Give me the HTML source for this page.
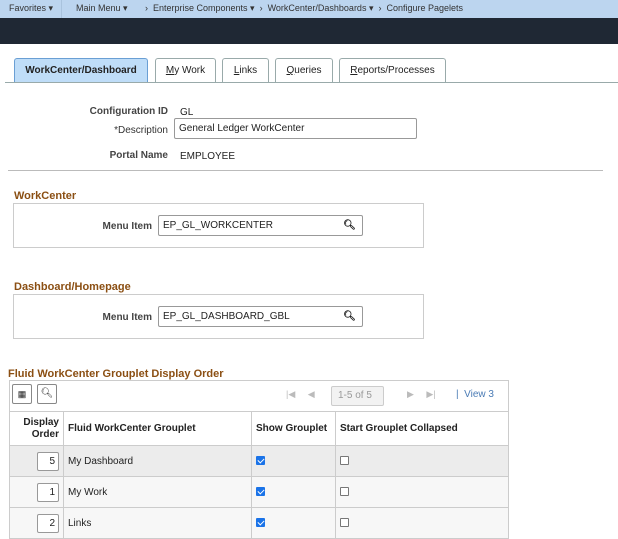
<!DOCTYPE html>
<html><head><style>
*{box-sizing:border-box;margin:0;padding:0}
body{width:618px;height:524px;overflow:hidden;background:#fff;font-family:"Liberation Sans",Arial,sans-serif;font-size:10px;color:#222;position:relative}
.a{position:absolute}
.tab{position:absolute;top:58px;height:25px;border:1px solid #9aa;border-bottom:none;border-radius:3px 3px 0 0;background:#fff;font-size:10px;text-align:center;line-height:23px;color:#222}
.lbl{position:absolute;font-weight:bold;color:#444;font-size:10px;text-align:right}
.inp{position:absolute;border:1px solid #999;border-radius:2px;background:#fff;font-size:10px;padding-left:4px;line-height:19px}
.sec{position:absolute;color:#8b4f13;font-weight:bold;font-size:11px}
.box{position:absolute;border:1px solid #ccc}
td{border:1px solid #ccc;font-size:10px;padding:0 4px}
.cb{display:inline-block;width:9px;height:9px;border:1px solid #777;border-radius:1px;vertical-align:middle;background:#fff}
.cbk{background:#1a73e8;border-color:#1a73e8;position:relative}
.cbk:after{content:"";position:absolute;left:2px;top:0px;width:3px;height:5px;border:solid #fff;border-width:0 1.5px 1.5px 0;transform:rotate(45deg)}
.oi{display:inline-block;width:22px;height:19px;border:1px solid #999;border-radius:2px;text-align:right;padding-right:3px;line-height:17px;background:#fff}
</style></head><body>
<div class="a" style="left:0;top:0;width:618px;height:18px;background:#bcd5ef;color:#333;font-size:9px;line-height:16px">
<span class="a" style="left:9px">Favorites ▾</span>
<span class="a" style="left:61px;top:0;width:1px;height:18px;background:#a9c3dd"></span>
<span class="a" style="left:76px">Main Menu ▾</span>
<span class="a" style="left:145px">›&nbsp; Enterprise Components ▾ &nbsp;›&nbsp; WorkCenter/Dashboards ▾ &nbsp;›&nbsp; Configure Pagelets</span>
</div>
<div class="a" style="left:0;top:18px;width:618px;height:26px;background:#1f2834"></div>
<div class="tab" style="left:14px;width:134px;background:#bfddf8;border-color:#6a9fd4;font-weight:bold">WorkCenter/Dashboard</div>
<div class="tab" style="left:155px;width:61px"><u>M</u>y Work</div>
<div class="tab" style="left:222px;width:47px"><u>L</u>inks</div>
<div class="tab" style="left:275px;width:58px"><u>Q</u>ueries</div>
<div class="tab" style="left:339px;width:107px"><u>R</u>eports/Processes</div>
<div class="a" style="left:5px;top:82px;width:613px;height:1px;background:#9aa"></div>

<div class="lbl" style="left:40px;width:128px;top:106px">Configuration ID</div>
<div class="a" style="left:180px;top:107px">GL</div>
<div class="lbl" style="left:40px;width:128px;top:125px;font-weight:normal;color:#333">*Description</div>
<div class="inp" style="left:174px;top:118px;width:243px;height:21px">General Ledger WorkCenter</div>
<div class="lbl" style="left:40px;width:128px;top:150px">Portal Name</div>
<div class="a" style="left:180px;top:151px">EMPLOYEE</div>
<div class="a" style="left:8px;top:170px;width:595px;height:1px;background:#bbb"></div>

<div class="sec" style="left:14px;top:190px">WorkCenter</div>
<div class="box" style="left:13px;top:203px;width:411px;height:45px"></div>
<div class="lbl" style="left:60px;width:92px;top:221px">Menu Item</div>
<div class="inp" style="left:158px;top:215px;width:205px;height:21px">EP_GL_WORKCENTER<span class="a" style="right:6px;top:0;font-weight:bold">&#x1F50D;&#xFE0E;</span></div>

<div class="sec" style="left:14px;top:281px">Dashboard/Homepage</div>
<div class="box" style="left:13px;top:294px;width:411px;height:45px"></div>
<div class="lbl" style="left:60px;width:92px;top:312px">Menu Item</div>
<div class="inp" style="left:158px;top:306px;width:205px;height:21px">EP_GL_DASHBOARD_GBL<span class="a" style="right:6px;top:0;font-weight:bold">&#x1F50D;&#xFE0E;</span></div>

<div class="sec" style="left:8px;top:368px">Fluid WorkCenter Grouplet Display Order</div>
<div class="box" style="left:9px;top:380px;width:500px;height:150px;border-color:#ccc"></div>
<div class="a" style="left:12px;top:384px;width:20px;height:20px;border:1px solid #888;border-radius:2px;text-align:center;line-height:18px;font-size:9px">▦</div>
<div class="a" style="left:37px;top:384px;width:20px;height:20px;border:1px solid #888;border-radius:2px;text-align:center;line-height:18px;font-size:10px">&#x1F50D;&#xFE0E;</div>
<div class="a" style="left:286px;top:389px;color:#bbb;font-size:9px">|◀ &nbsp;&nbsp;&nbsp; ◀</div>
<div class="a" style="left:331px;top:386px;width:53px;height:20px;border:1px solid #ccc;border-radius:2px;background:#f2f2f2;color:#999;line-height:18px;padding-left:6px;font-size:10px">1-5 of 5 ⌄</div>
<div class="a" style="left:407px;top:389px;color:#bbb;font-size:9px">▶ &nbsp;&nbsp;&nbsp; ▶|</div>
<div class="a" style="left:456px;top:389px;color:#4a7bb5;font-size:10px">|&nbsp; View 3</div>
<table class="a" style="left:9px;top:411px;width:500px;border-collapse:collapse">
<tr style="height:34px;font-weight:bold;background:#fff"><td style="width:54px;text-align:right;line-height:12px;font-weight:bold">Display<br>Order</td><td style="width:188px;font-weight:bold">Fluid WorkCenter Grouplet</td><td style="width:84px;font-weight:bold">Show Grouplet</td><td style="font-weight:bold">Start Grouplet Collapsed</td></tr>
<tr style="height:31px;background:#ececec"><td style="text-align:right"><span class="oi">5</span></td><td>My Dashboard</td><td><span class="cb cbk"></span></td><td><span class="cb"></span></td></tr>
<tr style="height:31px;background:#f7f7f7"><td style="text-align:right"><span class="oi">1</span></td><td>My Work</td><td><span class="cb cbk"></span></td><td><span class="cb"></span></td></tr>
<tr style="height:31px;background:#f7f7f7"><td style="text-align:right"><span class="oi">2</span></td><td>Links</td><td><span class="cb cbk"></span></td><td><span class="cb"></span></td></tr>
</table>
</body></html>
